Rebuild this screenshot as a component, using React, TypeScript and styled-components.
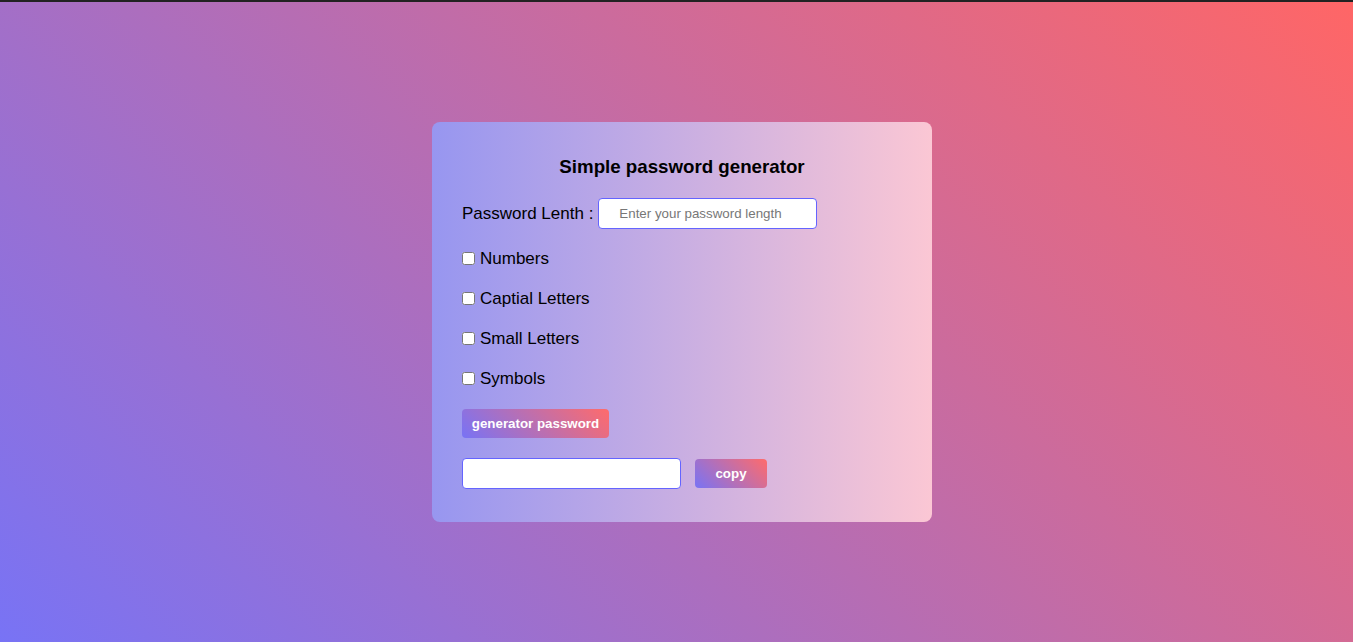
import React from "react";
import styled, { createGlobalStyle } from "styled-components";

const Global = createGlobalStyle`
  html, body { margin: 0; padding: 0; }
  body { font-family: "Liberation Sans", Arial, sans-serif; }
  * { box-sizing: border-box; }
`;

const Page = styled.div`
  width: 1353px;
  height: 642px;
  border-top: 2px solid #222;
  background: linear-gradient(45deg, #7873f5, #ff6666);
  display: flex;
  align-items: center;
  justify-content: center;
  padding-left: 11px;
`;

const Card = styled.div`
  width: 500px;
  height: 400px;
  border-radius: 8px;
  background: linear-gradient(to right, #9796f0, #fbc7d4);
  padding: 33px 30px;
  display: flex;
  flex-direction: column;
  color: #000;
`;

const Title = styled.h3`
  margin: 0 0 19px;
  font-size: 18.72px;
  line-height: 24px;
  font-weight: bold;
  text-align: center;
`;

const LengthRow = styled.div`
  display: flex;
  align-items: center;
  height: 31px;
  font-size: 17px;
  gap: 5px;
  margin-bottom: 20px;
`;

const TextInput = styled.input`
  width: 219px;
  height: 31px;
  border: 1px solid #6464ff;
  border-radius: 4px;
  background: #fff;
  padding: 0 0 0 20px;
  font-family: "Liberation Sans", Arial, sans-serif;
  font-size: 13.33px;
  outline: none;
  &::placeholder { color: #777; }
`;

const CheckRow = styled.label`
  display: flex;
  align-items: center;
  height: 20px;
  font-size: 17px;
  gap: 5px;
  margin-bottom: 20px;
`;

const Check = styled.input`
  margin: 0 0 1px;
  width: 13px;
  height: 13px;
`;

const GradButton = styled.button<{ $w: number }>`
  width: ${(p) => p.$w}px;
  height: 29px;
  border: none;
  border-radius: 4px;
  background: linear-gradient(45deg, #7873f5, #ff6b6b);
  color: #fff;
  font-family: "Liberation Sans", Arial, sans-serif;
  font-weight: bold;
  font-size: 13.33px;
  padding: 0;
  cursor: pointer;
`;

const GenWrap = styled.div`
  margin-bottom: 20px;
`;

const OutRow = styled.div`
  display: flex;
  align-items: center;
  gap: 14px;
`;

export default function App() {
  return (
    <>
      <Global />
      <Page>
        <Card>
          <Title>Simple password generator</Title>
          <LengthRow>
            <span>Password Lenth :</span>
            <TextInput placeholder="Enter your password length" />
          </LengthRow>
          <CheckRow><Check type="checkbox" />Numbers</CheckRow>
          <CheckRow><Check type="checkbox" />Captial Letters</CheckRow>
          <CheckRow><Check type="checkbox" />Small Letters</CheckRow>
          <CheckRow><Check type="checkbox" />Symbols</CheckRow>
          <GenWrap>
            <GradButton $w={147}>generator password</GradButton>
          </GenWrap>
          <OutRow>
            <TextInput />
            <GradButton $w={72}>copy</GradButton>
          </OutRow>
        </Card>
      </Page>
    </>
  );
}
